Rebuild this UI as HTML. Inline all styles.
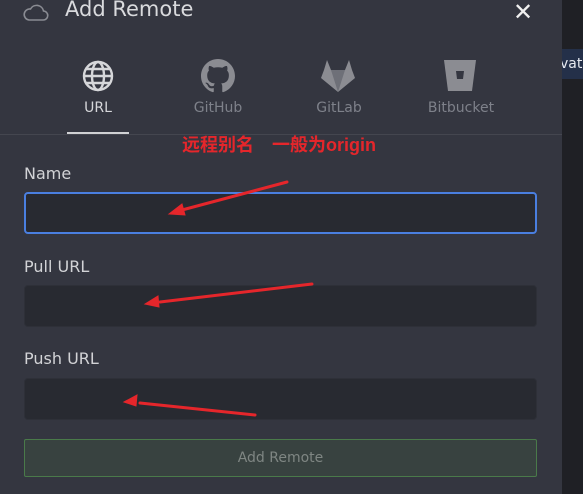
<!DOCTYPE html>
<html><head><meta charset="utf-8"><style>
*{margin:0;padding:0;box-sizing:border-box}
body{width:583px;height:494px;overflow:hidden;background:#1f2025;font-family:"DejaVu Sans","Liberation Sans",sans-serif;position:relative}
.panel{position:absolute;left:0;top:0;width:562px;height:494px;background:#343640}
.side{position:absolute;left:562px;top:49px;width:21px;height:30px;background:#243049;color:#e6e9ef;font-size:14px;line-height:30px;overflow:hidden;white-space:nowrap;text-indent:-2px}
.title{position:absolute;left:65px;top:-3px;color:#d9dadd;font-size:21px}
.x{position:absolute;left:513px;top:-2px;color:#f0f0f0;font-size:24px;font-weight:bold;font-family:"DejaVu Sans",sans-serif}
.tab{position:absolute;top:100px;font-size:14px;color:#7e818a;width:90px;text-align:center}
.line{position:absolute;left:0;top:134px;width:562px;height:1px;background:#44464f}
.ul{position:absolute;left:67px;top:132px;width:62px;height:2px;background:#d0d1d4}
.lbl{position:absolute;left:24px;color:#d2d3d6;font-size:16px}
.in{position:absolute;left:24px;width:513px;height:42px;background:#282a31;border:1px solid #2e3038;border-radius:4px}
.btn{position:absolute;left:24px;top:439px;width:513px;height:38px;background:#384240;border:1px solid #4a7a4a;border-radius:2px;color:#7f8683;font-size:14px;text-align:center;line-height:36px}
.note{position:absolute;left:182px;top:131px;color:#e5262b;font-size:18px;font-weight:bold;font-family:"Liberation Sans","Noto Sans CJK SC",sans-serif;white-space:nowrap}
</style></head><body>
<div class="panel"></div>
<div class="side">vate</div>
<svg style="position:absolute;left:23px;top:2px" width="26" height="20" viewBox="0 0 26 20"><path d="M6 18h14a4.5 4.5 0 0 0 .5-9 7 7 0 0 0-13-2A5.5 5.5 0 0 0 6 18z" fill="none" stroke="#8a8c93" stroke-width="1.6"/></svg>
<div class="title">Add Remote</div>
<div class="x">✕</div>
<svg style="position:absolute;left:82px;top:60px" width="32" height="32" viewBox="0 0 32 32" fill="none" stroke="#d6d7da" stroke-width="2.4"><circle cx="16" cy="16" r="14"/><ellipse cx="16" cy="16" rx="6" ry="14"/><path d="M2 16h28M4.5 9h23M4.5 23h23"/></svg>
<svg style="position:absolute;left:201px;top:59px" width="34" height="34" viewBox="0 0 16 16"><path fill="#8b8c92" d="M8 0C3.58 0 0 3.580 0 8c0 3.54 2.290 6.530 5.470 7.590.4.070.55-.170.55-.380 0-.190-.010-.820-.010-1.490-2.010.370-2.530-.490-2.690-.940-.090-.230-.480-.940-.820-1.130-.280-.150-.680-.520-.010-.530.630-.010 1.080.580 1.230.820.720 1.210 1.870.870 2.330.660.070-.520.280-.870.510-1.070-1.780-.2-3.640-.890-3.640-3.950 0-.870.310-1.590.820-2.150-.080-.2-.360-1.020.080-2.120 0 0 .670-.210 2.2.820.640-.180 1.320-.270 2-.270.680 0 1.360.090 2 .270 1.530-1.040 2.2-.820 2.2-.820.440 1.1.160 1.920.080 2.120.510.560.820 1.270.820 2.150 0 3.070-1.870 3.750-3.650 3.950.290.250.540.730.540 1.480 0 1.070-.010 1.930-.010 2.2 0 .210.150.460.550.380A8.013 8.013 0 0016 8c0-4.420-3.580-8-8-8z"/></svg>
<svg style="position:absolute;left:320px;top:58px" width="36" height="35" viewBox="0 0 36 35"><path fill="#8b8c92" d="M18 34L1 20l3-8L7 2l4 10h14l4-10 3 10 3 8z"/><path fill="#6e7078" d="M18 34L11 12h14z"/></svg>
<svg style="position:absolute;left:443px;top:59px" width="34" height="33" viewBox="0 0 34 33"><path fill="#8b8c92" d="M1 1h32l-4 31H5z"/><path fill="#343640" d="M13 12h8l-1 8h-6z"/></svg>
<div class="tab" style="left:53px;color:#d6d7da">URL</div>
<div class="tab" style="left:173px">GitHub</div>
<div class="tab" style="left:294px">GitLab</div>
<div class="tab" style="left:416px">Bitbucket</div>
<div class="line"></div><div class="ul"></div>
<div class="note">远程别名　一般为origin</div>
<div class="lbl" style="top:164px">Name</div>
<div class="in" style="top:192px;border:2px solid #4a7fe0"></div>
<div class="lbl" style="top:257px">Pull URL</div>
<div class="in" style="top:285px"></div>
<div class="lbl" style="top:349px">Push URL</div>
<div class="in" style="top:378px"></div>
<div class="btn">Add Remote</div>
<svg style="position:absolute;left:0;top:0" width="583" height="494" fill="#e5262b" stroke="#e5262b" stroke-width="3" stroke-linecap="round">
<path d="M287 182L182 210" fill="none"/><path d="M169 214l13-10 3 11z" stroke-width="1"/>
<path d="M312 284L160 302" fill="none"/><path d="M145 304l13-8 1 11z" stroke-width="1"/>
<path d="M255 415L140 403" fill="none"/><path d="M124 402l13-7-1 11z" stroke-width="1"/>
</svg>
</body></html>
